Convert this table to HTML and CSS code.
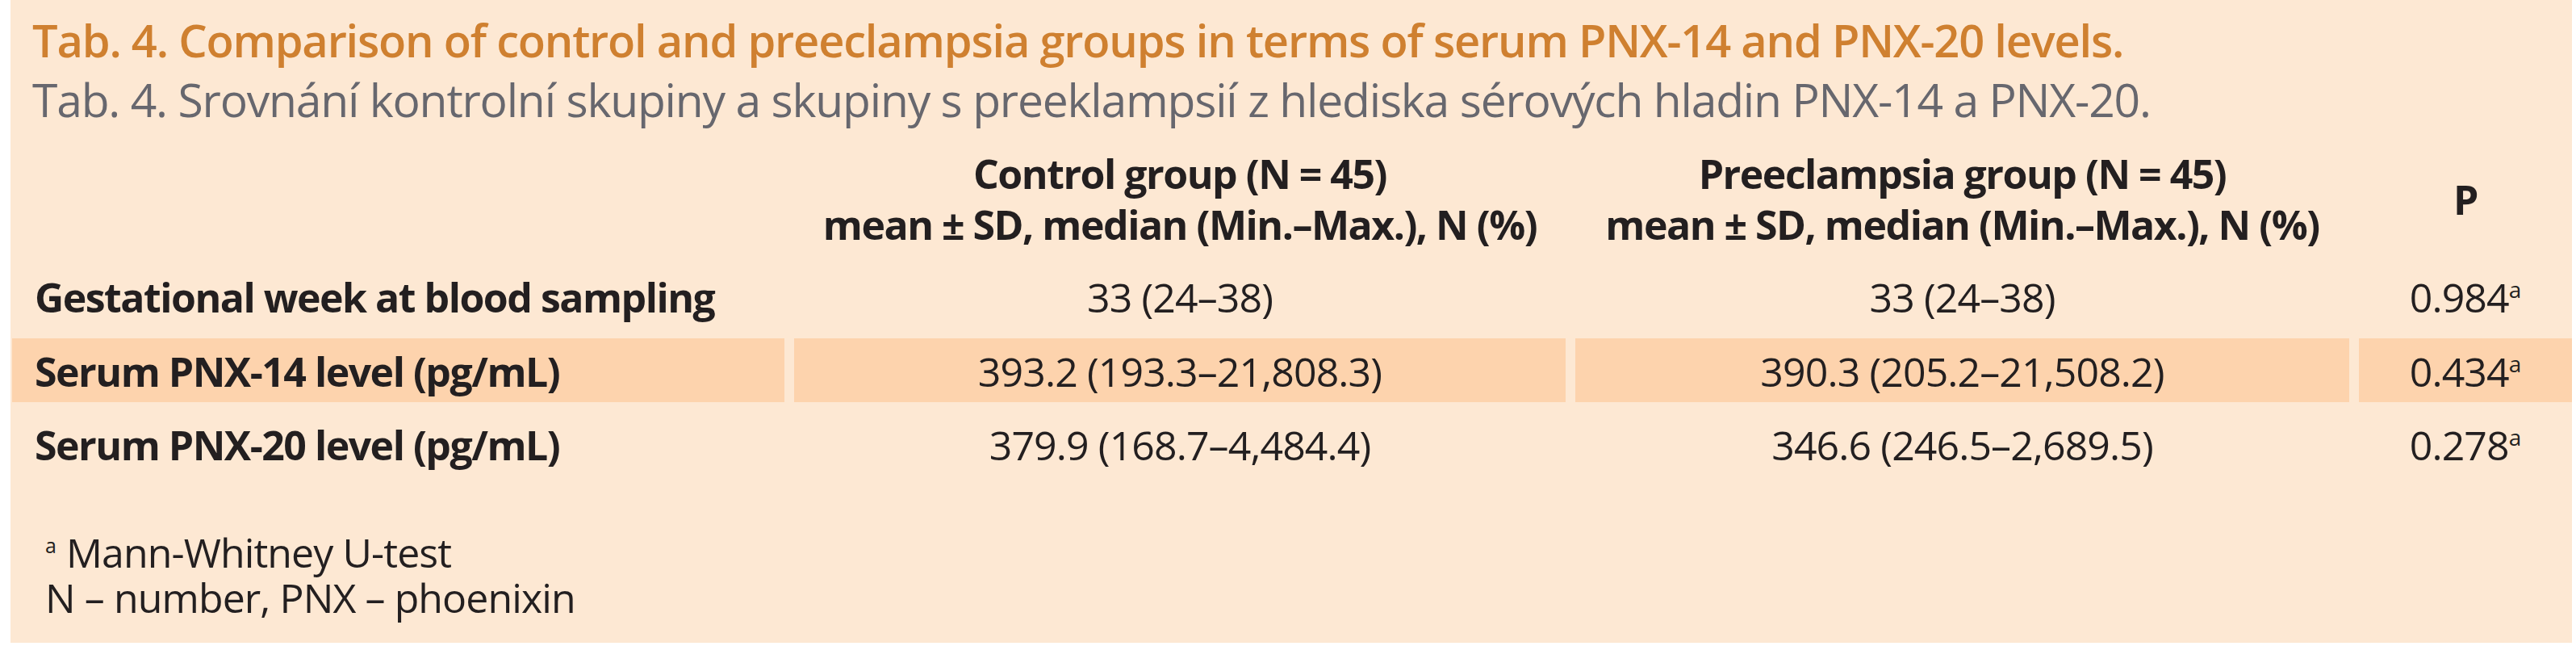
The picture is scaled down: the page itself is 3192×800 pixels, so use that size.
FILE: index.html
```html
<!DOCTYPE html>
<html lang="en">
<head>
<meta charset="utf-8">
<title>Tab. 4</title>
<link rel="stylesheet" href="styles.css">
</head>
<body>
<div class="panel">
  <div class="caption">
    <div class="title">Tab. 4. Comparison of control and preeclampsia groups in terms of serum PNX-14 and PNX-20 levels.</div>
    <div class="subtitle">Tab. 4. Srovnání kontrolní skupiny a skupiny s preeklampsií z hlediska sérových hladin PNX-14 a PNX-20.</div>
  </div>
  <table class="data">
    <colgroup>
      <col class="c1"><col class="c2"><col class="c3"><col class="c4">
    </colgroup>
    <thead>
      <tr class="head">
        <th class="label"></th>
        <th>Control group (N = 45)<br>mean ± SD, median (Min.–Max.), N (%)</th>
        <th>Preeclampsia group (N = 45)<br>mean ± SD, median (Min.–Max.), N (%)</th>
        <th>P</th>
      </tr>
    </thead>
    <tbody>
      <tr class="r1">
        <td class="label">Gestational week at blood sampling</td>
        <td>33 (24–38)</td>
        <td>33 (24–38)</td>
        <td>0.984<span class="sup">a</span></td>
      </tr>
      <tr class="r2 shaded">
        <td class="label">Serum PNX-14 level (pg/mL)</td>
        <td>393.2 (193.3–21,808.3)</td>
        <td>390.3 (205.2–21,508.2)</td>
        <td>0.434<span class="sup">a</span></td>
      </tr>
      <tr class="r3">
        <td class="label">Serum PNX-20 level (pg/mL)</td>
        <td>379.9 (168.7–4,484.4)</td>
        <td>346.6 (246.5–2,689.5)</td>
        <td>0.278<span class="sup">a</span></td>
      </tr>
    </tbody>
  </table>
  <div class="notes">
    <div><span class="sup">a</span> Mann-Whitney U-test</div>
    <div>N – number, PNX – phoenixin</div>
  </div>
</div>
</body>
</html>
```

FILE: styles.css
```css
html, body {
  margin: 0;
  padding: 0;
  background: #ffffff;
}

body {
  font-family: "Open Sans", "Noto Sans", sans-serif;
  color: #231f20;
}

.panel {
  margin-left: 13px;
  width: 3174px;
  height: 796px;
  background: #fde8d3;
  overflow: hidden;
}

.caption {
  padding: 12px 0 0 27px;
}

.title {
  font-size: 56px;
  font-weight: 600;
  line-height: 74px;
  letter-spacing: -1.2px;
  color: #cf8030;
  white-space: nowrap;
}

.subtitle {
  font-size: 57px;
  font-weight: 400;
  line-height: 74px;
  letter-spacing: -1.2px;
  color: #67676e;
  white-space: nowrap;
}

.data {
  table-layout: fixed;
  border-collapse: separate;
  border-spacing: 12px 0;
  width: 3196px;
  margin-left: -10px;
  font-size: 50px;
  letter-spacing: -0.9px;
}

.c1 { width: 957px; }
.c2 { width: 956px; }
.c3 { width: 959px; }
.c4 { width: 264px; }

.data th,
.data td {
  padding: 0;
  text-align: center;
  vertical-align: middle;
  white-space: nowrap;
  line-height: 60px;
  font-weight: 400;
}

.data th {
  font-weight: 700;
  letter-spacing: -1.5px;
  line-height: 63px;
  padding-top: 24px;
  padding-bottom: 18px;
}

.data .label {
  text-align: left;
  padding-left: 28px;
  font-weight: 700;
  letter-spacing: -1.5px;
}

.r1 td { padding-top: 10px; padding-bottom: 21px; }
.r2 td { padding-top: 11px; padding-bottom: 8px; }
.r3 td { padding-top: 23px; padding-bottom: 10px; }

.shaded td {
  background: #fdd3ad;
}

.sup {
  font-size: 0.56em;
  line-height: 0;
  vertical-align: super;
  letter-spacing: 0;
}

.notes {
  margin-top: 65px;
  padding-left: 43px;
  font-size: 50px;
  line-height: 56px;
  letter-spacing: -0.9px;
}

.notes .sup {
  font-size: 0.5em;
}
```
